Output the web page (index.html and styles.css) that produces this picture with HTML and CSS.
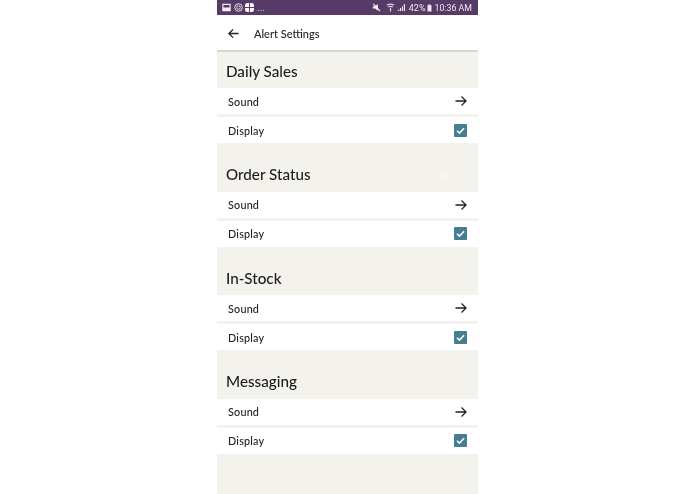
FILE: index.html
```html
<!DOCTYPE html>
<html>
<head>
    <meta charset="UTF-8">
    <title>Alert Settings</title>
    <link rel="stylesheet" href="styles.css">
</head>
<body>
    <div class="phone">
        <div class="status-bar">
            <div class="status-left">
                <svg class="status-icon" viewBox="0 0 10 10"><path d="M1 1.500h8v7H1z" fill="none" stroke="#f2eef3" stroke-width="1.300"/><path d="M1 8.500V5h8v3.500z" fill="#f2eef3"/></svg>
                <svg class="status-icon" viewBox="0 0 10 10"><circle cx="5" cy="5" r="4.200" fill="none" stroke="#e4dde7" stroke-width="1.100"/><circle cx="5" cy="5" r="2" fill="none" stroke="#e4dde7" stroke-width="1.100"/></svg>
                <svg class="status-icon clover" viewBox="0 0 10 10"><path d="M0 2.500a2.500 2.500 0 0 1 2.500-2.500h2v4.500H0zM5.500 0h2a2.500 2.500 0 0 1 2.500 2.500v2H5.500zM0 5.500h4.500V10h-2a2.500 2.500 0 0 1-2.500-2.500zM5.500 5.500H10v2a2.500 2.500 0 0 1-2.500 2.500h-2z" fill="#f7f4f8"/></svg>
                <span class="status-dots">...</span>
            </div>
            <div class="status-right">
                <svg class="status-icon mute" viewBox="0 0 10 10"><path d="M1 3.500h2.500L6.500 1v7.500L3.500 6H1z" fill="#f7f4f8"/><path d="M1.500 1l7.500 8" stroke="#f7f4f8" stroke-width="1.200"/></svg>
                <svg class="status-icon wifi" viewBox="0 0 10 10"><path d="M1 2.500Q5 0 9 2.500M2.500 4.500Q5 3 7.500 4.500" fill="none" stroke="#dcd4e0" stroke-width="1.200"/><path d="M5 5.500v4" stroke="#dcd4e0" stroke-width="1.400"/></svg>
                <svg class="status-icon signal" viewBox="0 0 10 10"><path d="M1 9h1.300V7.500H1zM3.200 9h1.300V5.500H3.200zM5.400 9h1.300V3.500H5.400zM7.600 9h1.300V1H7.600z" fill="#ece6ee"/></svg>
                <span class="status-text">42%</span>
                <svg class="battery" viewBox="0 0 6 10"><path d="M1.500 0.500h3V1.500h1v8h-5v-8h1z" fill="#ece6ee"/></svg>
                <span class="status-text time">10:36 AM</span>
            </div>
        </div>

        <div class="app-header">
            <svg class="back-icon" viewBox="0 0 12 12"><path d="M11.500 6H1M5.500 1.500L1 6l4.500 4.500" fill="none" stroke="#222" stroke-width="1.400"/></svg>
            <span class="app-title">Alert Settings</span>
        </div>

        <div class="content">
            <div class="section">
                <h2>Daily Sales</h2>
                <div class="row">
                    <span>Sound</span>
                    <svg class="arrow-icon" viewBox="0 0 12 12"><path d="M0.500 6H11M6.500 1.500L11 6l-4.500 4.500" fill="none" stroke="#222" stroke-width="1.300"/></svg>
                </div>
                <div class="row">
                    <span>Display</span>
                    <svg class="check-icon" viewBox="0 0 12 12"><rect width="12" height="12" rx="1" fill="#437f90"/><path d="M2.800 6.200l2.200 2.200 4.300-4.500" fill="none" stroke="#fff" stroke-width="1.400"/></svg>
                </div>
            </div>
            <div class="section">
                <h2>Order Status</h2>
                <span class="ghost-yes">Yes</span>
                <div class="row">
                    <span>Sound</span>
                    <svg class="arrow-icon" viewBox="0 0 12 12"><path d="M0.500 6H11M6.500 1.500L11 6l-4.500 4.500" fill="none" stroke="#222" stroke-width="1.300"/></svg>
                </div>
                <div class="row">
                    <span>Display</span>
                    <svg class="check-icon" viewBox="0 0 12 12"><rect width="12" height="12" rx="1" fill="#437f90"/><path d="M2.800 6.200l2.200 2.200 4.300-4.500" fill="none" stroke="#fff" stroke-width="1.400"/></svg>
                </div>
            </div>
            <div class="section">
                <h2>In-Stock</h2>
                <div class="row">
                    <span>Sound</span>
                    <svg class="arrow-icon" viewBox="0 0 12 12"><path d="M0.500 6H11M6.500 1.500L11 6l-4.500 4.500" fill="none" stroke="#222" stroke-width="1.300"/></svg>
                </div>
                <div class="row">
                    <span>Display</span>
                    <svg class="check-icon" viewBox="0 0 12 12"><rect width="12" height="12" rx="1" fill="#437f90"/><path d="M2.800 6.200l2.200 2.200 4.300-4.500" fill="none" stroke="#fff" stroke-width="1.400"/></svg>
                </div>
            </div>
            <div class="section">
                <h2>Messaging</h2>
                <div class="row">
                    <span>Sound</span>
                    <svg class="arrow-icon" viewBox="0 0 12 12"><path d="M0.500 6H11M6.500 1.500L11 6l-4.500 4.500" fill="none" stroke="#222" stroke-width="1.300"/></svg>
                </div>
                <div class="row">
                    <span>Display</span>
                    <svg class="check-icon" viewBox="0 0 12 12"><rect width="12" height="12" rx="1" fill="#437f90"/><path d="M2.800 6.200l2.200 2.200 4.300-4.500" fill="none" stroke="#fff" stroke-width="1.400"/></svg>
                </div>
            </div>
        </div>
    </div>
</body>
</html>
```

FILE: styles.css
```css
html, body {
    height: 100%;
}
body {
    margin: 0;
    background-color: white;
    font-family: Lato, "Noto Sans", sans-serif;
    color: #222;
    overflow: hidden;
}
.phone {
    width: 261px;
    height: 494px;
    margin: 0 auto;
    display: flex;
    flex-direction: column;
    filter: blur(0.3px);
}
.status-bar {
    flex: none;
    height: 15px;
    padding: 0 6px 0 5px;
    display: flex;
    justify-content: space-between;
    align-items: center;
    background-color: #573a66;
    color: #eee8f0;
}
.status-left, .status-right {
    display: flex;
    align-items: center;
}
.status-left {
    gap: 3px;
}
.status-right {
    gap: 2px;
}
.status-icon {
    width: 9px;
    height: 9px;
}
.clover {
    margin-left: -1px;
}
.mute {
    margin-right: 3px;
}
.signal {
    margin-right: 1px;
}
.status-dots {
    font-family: Roboto, sans-serif;
    font-size: 10px;
    line-height: 9px;
    color: #cfc6d4;
}
.status-text {
    font-family: Roboto, sans-serif;
    font-size: 9px;
}
.time {
    font-size: 8.8px;
}
.battery {
    width: 5px;
    height: 8px;
}
.app-header {
    flex: none;
    height: 33px;
    display: flex;
    align-items: center;
    padding: 2px 0 0 11px;
    background-color: white;
    border-bottom: 2px solid #d8d7d4;
}
.back-icon {
    width: 11px;
    height: 11px;
    margin-right: 15px;
}
.app-title {
    font-size: 11px;
    font-weight: 500;
}
.content {
    flex: 1;
    background-color: #f4f2ed;
}
.section {
    position: relative;
    margin-bottom: 12.6px;
}
.section h2 {
    margin: 0;
    height: 36px;
    padding: 9.6px 0 0 9px;
    box-sizing: border-box;
    font-size: 15.2px;
    line-height: 18px;
    font-weight: 500;
    color: #1c1c1c;
}
.row {
    height: 26px;
    margin-bottom: 3px;
    padding: 0 11px 0 11px;
    display: flex;
    justify-content: space-between;
    align-items: center;
    background-color: white;
    font-size: 10.8px;
    font-weight: 500;
    letter-spacing: 0.2px;
}
.row:last-child {
    margin-bottom: 0;
}
.arrow-icon {
    width: 12px;
    height: 12px;
}
.check-icon {
    width: 13px;
    height: 13px;
}
.ghost-yes {
    position: absolute;
    top: 15px;
    left: 220px;
    font-size: 9px;
    color: #fbfaf8;
}
```
